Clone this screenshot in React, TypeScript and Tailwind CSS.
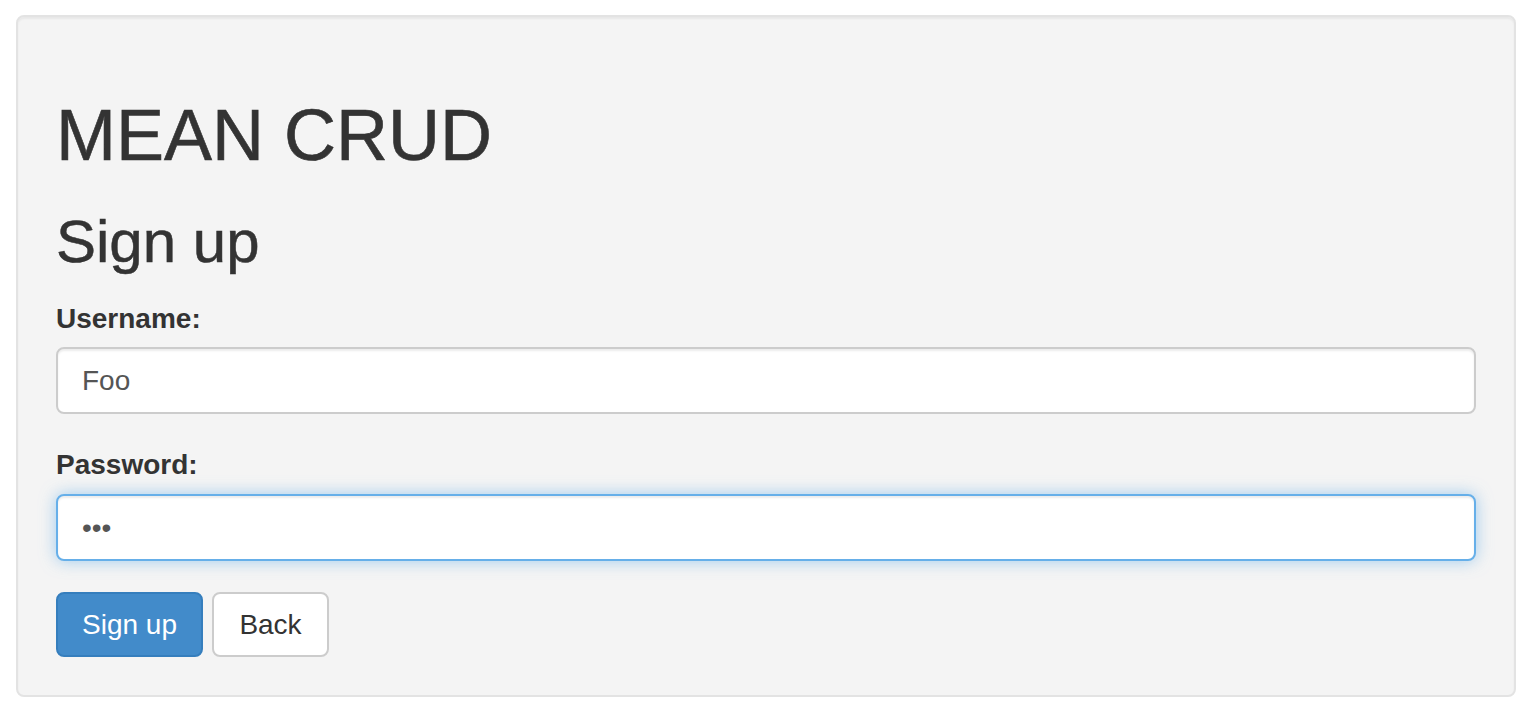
import React from 'react';

const SignUpPage: React.FC = () => {
  return (
    <div className="min-h-screen bg-white px-[16px] pt-[15px] pr-[17px] font-['Liberation_Sans',Arial,sans-serif] text-[#333]">
      {/* Well */}
      <div className="rounded-[8px] border-2 border-[#e3e3e3] bg-[#f4f4f4] p-[38px] shadow-[inset_0_2px_2px_rgba(0,0,0,0.05)]">
        <h1 className="mt-[41px] text-[72px] leading-[79px] font-normal [-webkit-text-stroke:0.6px_#333]">MEAN CRUD</h1>
        <h2 className="mt-[34px] text-[60px] leading-[66px] font-normal [-webkit-text-stroke:0.5px_#333]">Sign up</h2>

        <form className="mt-[24px]" onSubmit={(e) => e.preventDefault()}>
          {/* Username */}
          <div>
            <label className="block text-[28px] leading-[40px] font-bold">Username:</label>
            <input
              type="text"
              defaultValue="Foo"
              className="mt-[8px] block h-[67px] w-full rounded-[8px] border-2 border-[#ccc] bg-white px-[24px] text-[28px] text-[#555] shadow-[inset_0_2px_2px_rgba(0,0,0,0.075)] outline-none"
            />
          </div>

          {/* Password */}
          <div className="mt-[31px]">
            <label className="block text-[28px] leading-[40px] font-bold">Password:</label>
            <input
              type="password"
              defaultValue="foo"
              className="mt-[9px] block h-[67px] w-full rounded-[8px] border-2 border-[#66afe9] bg-white px-[24px] text-[28px] text-[#555] shadow-[inset_0_2px_2px_rgba(0,0,0,0.075),0_0_16px_rgba(102,175,233,0.6)] outline-none"
            />
          </div>

          {/* Actions */}
          <div className="mt-[31px] flex gap-[9px]">
            <button
              type="submit"
              className="h-[65px] w-[147px] rounded-[8px] border-2 border-[#357ebd] bg-[#428bca] text-[28px] text-white"
            >
              Sign up
            </button>
            <button
              type="button"
              className="h-[65px] w-[117px] rounded-[8px] border-2 border-[#ccc] bg-white text-[28px] text-[#333]"
            >
              Back
            </button>
          </div>
        </form>
      </div>
    </div>
  );
};

export default function App() {
  return <SignUpPage />;
}
